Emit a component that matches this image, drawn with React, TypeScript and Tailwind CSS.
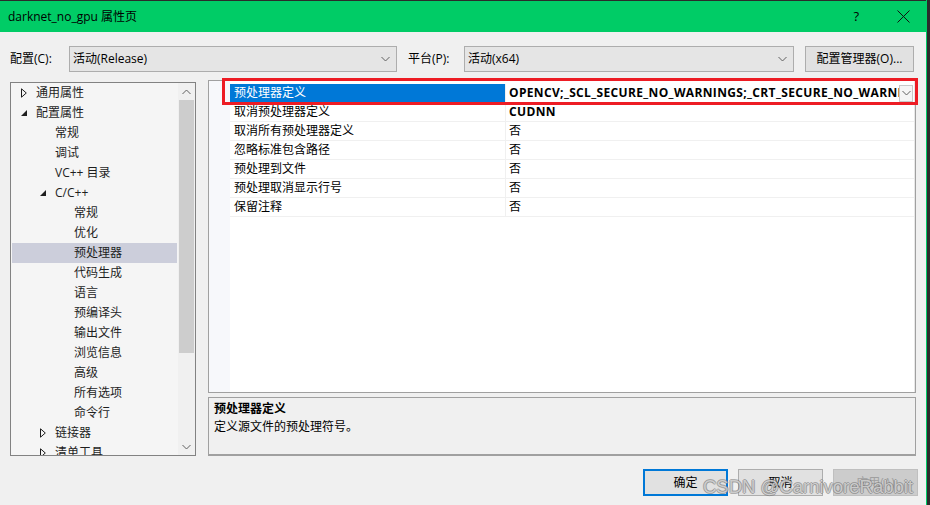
import React from 'react';

// Visual Studio project property pages dialog

type TreeItem = {
  label: string;
  level: 0 | 1 | 2;
  arrow?: 'open' | 'closed';
  selected?: boolean;
};

const TREE: TreeItem[] = [
  { label: '通用属性', level: 0, arrow: 'closed' },
  { label: '配置属性', level: 0, arrow: 'open' },
  { label: '常规', level: 1 },
  { label: '调试', level: 1 },
  { label: 'VC++ 目录', level: 1 },
  { label: 'C/C++', level: 1, arrow: 'open' },
  { label: '常规', level: 2 },
  { label: '优化', level: 2 },
  { label: '预处理器', level: 2, selected: true },
  { label: '代码生成', level: 2 },
  { label: '语言', level: 2 },
  { label: '预编译头', level: 2 },
  { label: '输出文件', level: 2 },
  { label: '浏览信息', level: 2 },
  { label: '高级', level: 2 },
  { label: '所有选项', level: 2 },
  { label: '命令行', level: 2 },
  { label: '链接器', level: 1, arrow: 'closed' },
  { label: '清单工具', level: 1, arrow: 'closed' },
];

const INDENT = ['pl-[9px]', 'pl-[28px]', 'pl-[47px]'];

const PROPS: { name: string; value: string; bold?: boolean }[] = [
  {
    name: '预处理器定义',
    value: 'OPENCV;_SCL_SECURE_NO_WARNINGS;_CRT_SECURE_NO_WARNINGS;GPU;%(PreprocessorDefinitions)',
    bold: true,
  },
  { name: '取消预处理器定义', value: 'CUDNN', bold: true },
  { name: '取消所有预处理器定义', value: '否' },
  { name: '忽略标准包含路径', value: '否' },
  { name: '预处理到文件', value: '否' },
  { name: '预处理取消显示行号', value: '否' },
  { name: '保留注释', value: '否' },
];

function Chevron({ up = false, className = '' }: { up?: boolean; className?: string }) {
  return (
    <svg width="9" height="6" viewBox="0 0 9 6" className={className}>
      <path
        d={up ? 'M0.5 5 L4.5 1 L8.5 5' : 'M0.5 1 L4.5 5 L8.5 1'}
        fill="none"
        stroke="currentColor"
        strokeWidth="1"
      />
    </svg>
  );
}

function Arrow({ kind }: { kind: 'open' | 'closed' }) {
  if (kind === 'open') {
    return (
      <svg width="6" height="6" viewBox="0 0 6 6">
        <path d="M6 0 L6 6 L0 6 Z" fill="#1e1e1e" />
      </svg>
    );
  }
  return (
    <svg width="6" height="10" viewBox="0 0 6 10">
      <path d="M0.5 0.8 L5.3 5 L0.5 9.2 Z" fill="none" stroke="#1e1e1e" strokeWidth="1" />
    </svg>
  );
}

function Combo({ text, className }: { text: string; className: string }) {
  return (
    <div
      className={`flex h-[26px] items-center justify-between border border-[#adadad] bg-[#e5e5e5] pl-[3px] pr-[6px] ${className}`}
    >
      <span>{text}</span>
      <Chevron className="text-[#606060]" />
    </div>
  );
}

export default function App() {
  return (
    <div className="flex h-[505px] w-[930px] overflow-hidden bg-[#2b2b2b] font-['Open_Sans','Noto_Sans_CJK_SC',sans-serif] text-[12px] text-black">
      <div className="relative flex h-full w-[927px] flex-col border-r border-[#00cc66] bg-[#f0f0f0]">
        {/* Title bar */}
        <div className="flex h-[32px] items-center justify-between border-t border-[#2b2b2b] bg-[#00cc66] pl-[8px] pr-[16px]">
          <span className="text-[12px]">darknet_no_gpu 属性页</span>
          <div className="flex items-center gap-[38px]">
            <span className="text-[13px]">?</span>
            <svg width="13" height="13" viewBox="0 0 13 13">
              <path d="M0.5 0.5 L12.5 12.5 M12.5 0.5 L0.5 12.5" stroke="#111" strokeWidth="1" />
            </svg>
          </div>
        </div>

        {/* Configuration row */}
        <div className="mt-[14px] flex h-[26px] items-center pl-[10px]">
          <span className="w-[59px]">配置(C):</span>
          <Combo text="活动(Release)" className="w-[328px]" />
          <span className="ml-[11px] w-[56px]">平台(P):</span>
          <Combo text="活动(x64)" className="w-[330px]" />
          <button className="ml-[11px] flex h-[26px] w-[109px] items-center justify-center border border-[#adadad] bg-[#e1e1e1]">
            配置管理器(O)...
          </button>
        </div>

        {/* Main area */}
        <div className="mt-[8px] flex h-[376px] items-start pl-[10px]">
          {/* Tree */}
          <div className="mt-[2px] flex h-[374px] w-[186px] border border-[#828282] bg-[#f5f5f5]">
            <div className="flex-1 overflow-hidden">
              {TREE.map((item, i) => (
                <div
                  key={i}
                  className={`mx-[1px] flex h-[20px] items-center whitespace-nowrap ${INDENT[item.level]} ${
                    item.selected ? 'bg-[#cccedb]' : ''
                  }`}
                >
                  <span className="flex w-[15px] items-center">
                    {item.arrow && <Arrow kind={item.arrow} />}
                  </span>
                  <span className="text-[#1e1e1e]">{item.label}</span>
                </div>
              ))}
            </div>
            <div className="flex w-[17px] flex-col bg-[#f0f0f0]">
              <div className="flex h-[17px] items-center justify-center text-[#606060]">
                <Chevron up />
              </div>
              <div className="mx-[1px] h-[253px] bg-[#cdcdcd]" />
              <div className="flex-1" />
              <div className="flex h-[17px] items-center justify-center text-[#606060]">
                <Chevron />
              </div>
            </div>
          </div>

          {/* Right column */}
          <div className="ml-[12px] flex h-full w-[708px] flex-col gap-[4px]">
            {/* Property grid */}
            <div className="relative h-[313px] border border-[#a0a0a0] bg-white">
              <div className="flex h-full">
                <div className="w-[21px] bg-[#f7f8fb]" />
                <div className="flex w-[685px] flex-col border-r border-[#e8e8e8] pt-[3px]">
                  {PROPS.map((p, i) => (
                    <div key={i} className="flex h-[19px] border-b border-[#f0f0f0]">
                      <div
                        className={`flex w-[275px] items-center pl-[4px] ${
                          i === 0 ? 'bg-[#0078d7] text-white' : ''
                        }`}
                      >
                        {p.name}
                      </div>
                      <div className="flex flex-1 items-center overflow-hidden border-l border-[#f0f0f0] pl-[3px]">
                        <span
                          className={`flex-1 overflow-hidden whitespace-nowrap ${
                            p.bold ? 'font-bold tracking-[0.35px]' : ''
                          }`}
                        >
                          {p.value}
                        </span>
                        {i === 0 && (
                          <span className="mr-[1px] flex h-[17px] w-[14px] shrink-0 items-center justify-center border border-[#c8c8c8] bg-[#f5f5f5] text-[#606060]">
                            <Chevron />
                          </span>
                        )}
                      </div>
                    </div>
                  ))}
                </div>
              </div>
              {/* Red annotation box */}
              <div className="pointer-events-none absolute left-[13px] top-[-3px] h-[27px] w-[696px] border-[3px] border-[#ed1c24]" />
            </div>

            {/* Description */}
            <div className="flex h-[59px] flex-col border border-b-2 border-[#a0a0a0] bg-[#f0f0f0] pl-[5px] pt-[2px]">
              <span className="font-bold leading-[18px]">预处理器定义</span>
              <span className="leading-[18px]">定义源文件的预处理符号。</span>
            </div>
          </div>
        </div>

        {/* Buttons */}
        <div className="mt-[13px] flex justify-end gap-[10px] pr-[8px]">
          <button className="h-[27px] w-[85px] border-2 border-[#0078d7] bg-[#e1e1e1]">确定</button>
          <button className="h-[27px] w-[85px] border border-[#adadad] bg-[#e1e1e1]">取消</button>
          <button className="h-[27px] w-[85px] border border-[#bfbfbf] bg-[#cccccc] text-[#a0a0a0]">
            应用(A)
          </button>
        </div>

        {/* Watermark */}
        <div className="pointer-events-none absolute left-[703px] top-[476px] font-['Liberation_Sans',sans-serif] text-[18.5px] leading-[22px] text-[rgba(255,255,255,0.6)] [text-shadow:1px_0_0_rgba(110,110,110,0.5),-1px_0_0_rgba(110,110,110,0.5),0_1px_0_rgba(110,110,110,0.5),0_-1px_0_rgba(110,110,110,0.5)]">
          CSDN @CarnivoreRabbit
        </div>
      </div>
    </div>
  );
}
